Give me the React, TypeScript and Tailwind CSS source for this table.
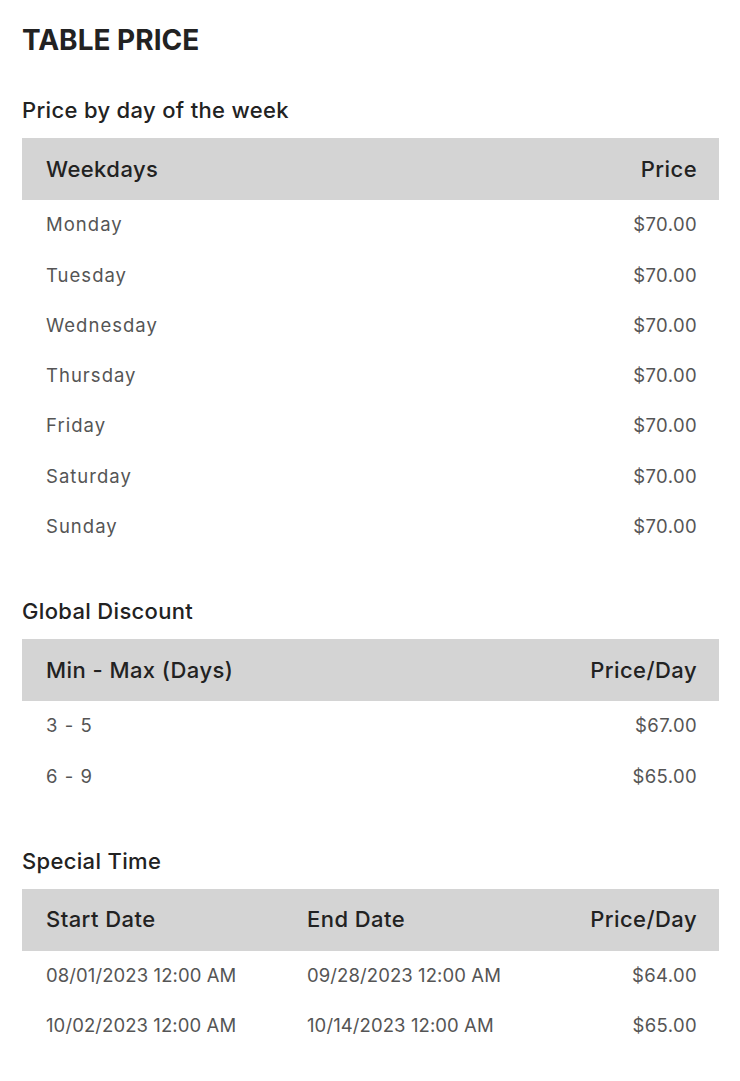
import React from "react";

const font = { fontFamily: "Inter, 'Noto Sans', sans-serif" };

function SectionTitle({ children, first }: { children: React.ReactNode; first?: boolean }) {
  return (
    <h2
      className={`text-[22px] leading-[28px] font-medium tracking-[0.015em] text-[#222] ${first ? "mt-[38px]" : "mt-[45px]"}`}
    >
      {children}
    </h2>
  );
}

function TwoColTable({ head, rows }: { head: [string, string]; rows: [string, string][] }) {
  return (
    <div className="mt-[14px]">
      <div className="flex h-[62px] items-center justify-between bg-[#d4d4d4] pl-[24px] pr-[22px] text-[22px] font-medium tracking-[0.02em] text-[#222]">
        <span>{head[0]}</span>
        <span>{head[1]}</span>
      </div>
      {rows.map((r, i) => (
        <div
          key={i}
          className="flex h-[50.3px] items-center justify-between pl-[24px] pr-[22px] text-[18.5px] text-[#555]"
        >
          <span className="tracking-[0.055em]">{r[0]}</span>
          <span className="tracking-[0.02em]">{r[1]}</span>
        </div>
      ))}
    </div>
  );
}

export default function App() {
  const days = ["Monday", "Tuesday", "Wednesday", "Thursday", "Friday", "Saturday", "Sunday"];
  const special: [string, string, string][] = [
    ["08/01/2023 12:00 AM", "09/28/2023 12:00 AM", "$64.00"],
    ["10/02/2023 12:00 AM", "10/14/2023 12:00 AM", "$65.00"],
  ];
  return (
    <div style={font} className="min-h-[1081px] w-[740px] bg-white pl-[22px] pr-[21px] pt-[22px] pb-[30px]">
      <h1 className="text-[28px] leading-[36px] font-bold text-[#222]">TABLE PRICE</h1>

      <SectionTitle first>Price by day of the week</SectionTitle>
      <TwoColTable head={["Weekdays", "Price"]} rows={days.map((d) => [d, "$70.00"] as [string, string])} />

      <SectionTitle>Global Discount</SectionTitle>
      <TwoColTable
        head={["Min - Max (Days)", "Price/Day"]}
        rows={[
          ["3 - 5", "$67.00"],
          ["6 - 9", "$65.00"],
        ]}
      />

      <SectionTitle>Special Time</SectionTitle>
      <div className="mt-[14px]">
        <div className="grid h-[62px] grid-cols-[261px_1fr_auto] items-center bg-[#d4d4d4] pr-[22px] text-[22px] font-medium tracking-[0.02em] text-[#222]">
          <span className="pl-[24px]">Start Date</span>
          <span className="pl-[24px]">End Date</span>
          <span className="text-right">Price/Day</span>
        </div>
        {special.map((r, i) => (
          <div
            key={i}
            className="grid h-[50.3px] grid-cols-[261px_1fr_auto] items-center pr-[22px] text-[18.5px] text-[#555]"
          >
            <span className="pl-[24px] tracking-[0.005em]">{r[0]}</span>
            <span className="pl-[24px] tracking-[0.005em]">{r[1]}</span>
            <span className="text-right tracking-[0.02em]">{r[2]}</span>
          </div>
        ))}
      </div>
    </div>
  );
}
